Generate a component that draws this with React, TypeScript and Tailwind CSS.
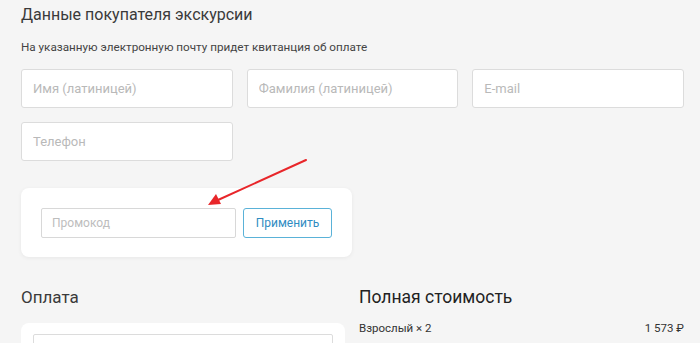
const fieldCls =
  "h-[39px] w-full rounded-[3px] border border-[#dcdcdc] bg-white px-[11px] text-[13px] text-[#333] placeholder:text-[#b9b9b9] outline-none";

const App = () => {
  return (
    <div
      className="relative h-[343px] w-[700px] overflow-hidden bg-[#f5f5f5] pl-[21px] pr-[16px]"
      style={{ fontFamily: "Roboto, 'Liberation Sans', sans-serif" }}
    >
      {/* Buyer data */}
      <h2 className="pt-[3px] text-[16px] leading-6 text-[#3a3a3a]">
        Данные покупателя экскурсии
      </h2>
      <p className="mt-[12px] text-[11.7px] leading-4 text-[#444]">
        На указанную электронную почту придет квитанция об оплате
      </p>

      <div className="mt-[14px] grid w-[663px] grid-cols-3 gap-x-[14px] gap-y-[14px]">
        <input className={fieldCls} placeholder="Имя (латиницей)" />
        <input className={fieldCls} placeholder="Фамилия (латиницей)" />
        <input className={fieldCls} placeholder="E-mail" />
        <input className={fieldCls} placeholder="Телефон" />
      </div>

      {/* Promo code */}
      <div className="mt-[27px] flex h-[69px] w-[331px] items-center gap-[7px] rounded-[8px] bg-white px-[20px] shadow-[0_1px_4px_rgba(0,0,0,0.06)]">
        <input
          className="h-[30px] w-[195px] rounded-[2px] border border-[#d8d8d8] bg-white px-[10px] text-[12px] text-[#333] placeholder:text-[#bdbdbd] outline-none"
          placeholder="Промокод"
        />
        <button className="h-[30px] w-[89px] rounded-[3px] border border-[#5ab2d8] bg-white text-[12px] text-[#2f8cc2]">
          Применить
        </button>
      </div>

      {/* Payment + total */}
      <div className="mt-[28px] flex gap-[14px]">
        <div className="w-[324px] shrink-0">
          <h3 className="text-[17px] leading-6 text-[#3a3a3a]">Оплата</h3>
          <div className="mt-[14px] h-[40px] rounded-t-[8px] bg-white px-[12px] pt-[11px]">
            <div className="h-[30px] rounded-[2px] border border-[#dcdcdc]" />
          </div>
        </div>
        <div className="flex-1">
          <h3 className="text-[17.5px] leading-6 text-[#222]">Полная стоимость</h3>
          <div className="mt-[11px] flex justify-between border-b border-[#e4e4e4] pb-[9px] text-[11.5px] leading-4 text-[#333]">
            <span>Взрослый × 2</span>
            <span>1 573 ₽</span>
          </div>
        </div>
      </div>

      {/* Red annotation arrow */}
      <svg
        className="pointer-events-none absolute left-0 top-0"
        width="700"
        height="343"
        viewBox="0 0 700 343"
      >
        <line x1="306" y1="160" x2="218" y2="200" stroke="#e8262a" strokeWidth="2" strokeLinecap="round" />
        <polygon points="208,205 216,194 221,204" fill="#e8262a" />
      </svg>
    </div>
  );
};

export default App;
